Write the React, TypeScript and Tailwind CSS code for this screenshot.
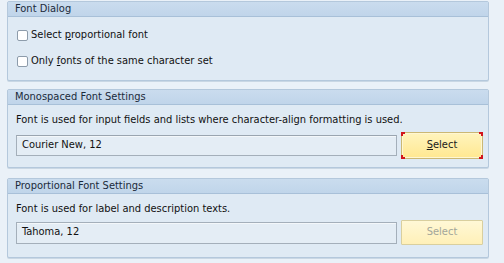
export default function App() {
    const font = "font-['Tahoma','DejaVu_Sans_Condensed','DejaVu_Sans',sans-serif]"

    const panel = "border border-[#b4c8dc] bg-[#dfeaf4] rounded-[2px] shadow-[0_1px_0_#c9d7e4]"
    const header = "h-[15px] flex items-center pl-[7px] bg-gradient-to-b from-[#cadcee] to-[#c0d5ea] border-b border-[#a8c0d8] text-[11px] text-[#1b2a3a]"

    const checkbox = "w-[11px] h-[11px] bg-white border border-[#8d9cab] rounded-[2px] shrink-0"

    return (
        <div className={`w-[504px] h-[263px] bg-[#eaf1f8] pt-[1px] pl-[7px] flex flex-col ${font} text-[11px] text-[#111]`}>
            {/* Font Dialog */}
            <div className={`${panel} w-[482px] h-[80px]`}>
                <div className={header}>Font Dialog</div>
                <div className="flex flex-col pl-[9px] pt-[13px] gap-[15px]">
                    <div className="flex items-center gap-[3px] h-[11px]">
                        <div className={checkbox} />
                        <span>Select <span className="underline">p</span>roportional font</span>
                    </div>
                    <div className="flex items-center gap-[3px] h-[11px]">
                        <div className={checkbox} />
                        <span>Only <span className="underline">f</span>onts of the same character set</span>
                    </div>
                </div>
            </div>

            {/* Monospaced */}
            <div className={`${panel} w-[482px] h-[79px] mt-[8px]`}>
                <div className={header}>Monospaced Font Settings</div>
                <div className="pl-[8px] pt-[8px] leading-[13px]">
                    Font is used for input fields and lists where character-align formatting is used.
                </div>
                <div className="flex items-center pl-[8px] mt-[6px] gap-[4px]">
                    <div className="w-[381px] h-[21px] border border-[#a4afba] border-t-[#9aa5b0] bg-[#e4edf5] flex items-center pl-[5px] shadow-[inset_0_1px_0_#f3f7fa]">
                        Courier New, 12
                    </div>
                    <div className="relative w-[82px] h-[27px]">
                        <button className="w-full h-full border border-[#cbb874] bg-gradient-to-b from-[#fff4bd] to-[#ffe890] text-[11px] text-[#1a1a1a] rounded-[1px] shadow-[inset_0_0_0_1px_#fff7d2]">
                            <span className="underline">S</span>elect
                        </button>
                        <span className="absolute left-0 top-0 w-[4px] h-[4px] border-l-2 border-t-2 border-[#d2141c]" />
                        <span className="absolute right-0 top-0 w-[4px] h-[4px] border-r-2 border-t-2 border-[#d2141c]" />
                        <span className="absolute left-0 bottom-0 w-[4px] h-[4px] border-l-2 border-b-2 border-[#d2141c]" />
                        <span className="absolute right-0 bottom-0 w-[4px] h-[4px] border-r-2 border-b-2 border-[#d2141c]" />
                    </div>
                </div>
            </div>

            {/* Proportional */}
            <div className={`${panel} w-[482px] h-[80px] mt-[10px]`}>
                <div className={header}>Proportional Font Settings</div>
                <div className="pl-[8px] pt-[8px] leading-[13px]">
                    Font is used for label and description texts.
                </div>
                <div className="flex items-center pl-[8px] mt-[5px] gap-[4px]">
                    <div className="w-[381px] h-[22px] border border-[#a4afba] bg-[#e4edf5] flex items-center pl-[5px] shadow-[inset_0_1px_0_#f3f7fa]">
                        Tahoma, 12
                    </div>
                    <button disabled className="w-[82px] h-[25px] border border-[#d9cf9e] bg-gradient-to-b from-[#fff8d6] to-[#fff0b8] text-[11px] text-[#a3a69a] rounded-[1px]">
                        Select
                    </button>
                </div>
            </div>
        </div>
    )
}
